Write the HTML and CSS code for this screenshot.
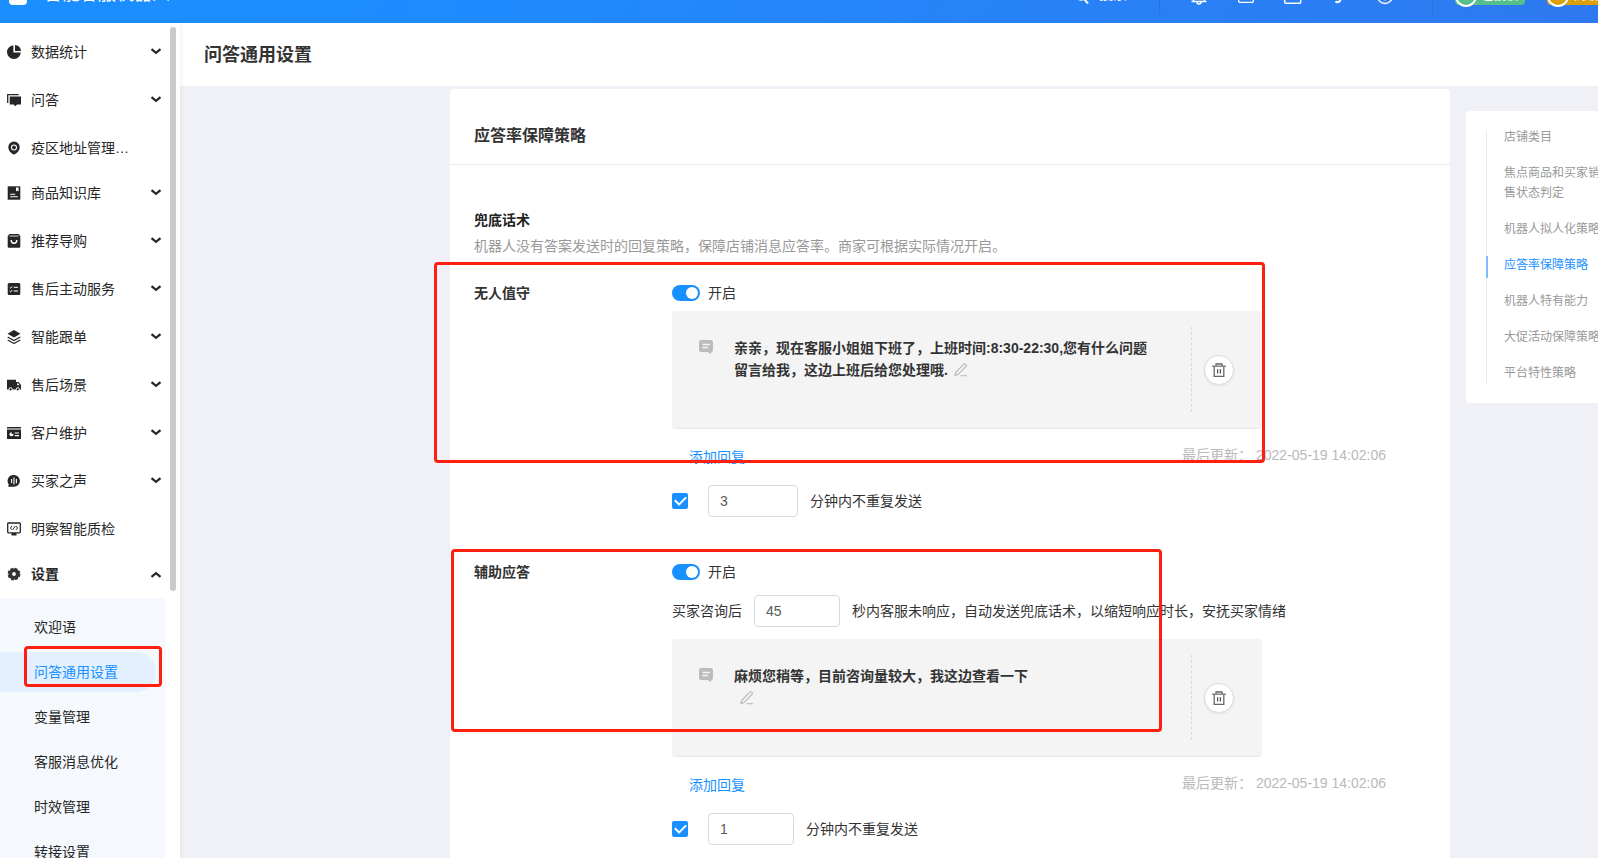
FILE: index.html
```html
<!DOCTYPE html>
<html lang="zh-CN">
<head>
<meta charset="utf-8">
<title>问答通用设置</title>
<link rel="stylesheet" href="styles.css">
</head>
<body>
<svg class="defs" aria-hidden="true">
  <symbol id="chevron" viewBox="0 0 12 12"><path d="M1.500 3.200 6 6.800 10.500 3.200" fill="none" stroke="#262626" stroke-width="2.200"/></symbol>
  <symbol id="bubble" viewBox="0 0 14 14"><path d="M2 0h10a2 2 0 0 1 2 2v8a2 2 0 0 1-1.500 2L11.500 14 8.500 12H2a2 2 0 0 1-2-2V2a2 2 0 0 1 2-2z" fill="#bcbcbc"/><path d="M3.500 4.500h7.500M3.500 7.500h5.500" stroke="#f4f4f4" stroke-width="1.300"/></symbol>
  <symbol id="pencil" viewBox="0 0 14 14"><path d="M1 12.500l.8-3.200L9.800 1.200a1.300 1.300 0 0 1 1.900 0l.3.300a1.300 1.300 0 0 1 0 1.900L4 11.600zM6.500 12.700H13" fill="none" stroke="#b5b5b5" stroke-width="1.100"/></symbol>
  <symbol id="trash" viewBox="0 0 14 14"><path d="M0 3.200h14" stroke="#777" stroke-width="1.300"/><path d="M4 3V1h6v2M2.200 3.500v9.800h9.600V3.500" fill="none" stroke="#666" stroke-width="1.300"/><path d="M5.600 6.300v4.200M8.400 6.300v4.200" stroke="#555" stroke-width="1.300"/></symbol>
</svg>

<header class="topbar">
  <div class="topbar-inner">
    <span class="logo"></span>
    <span class="brand">智能客服机器人</span>
    <div class="tools">
      <button class="search" type="button">
        <svg width="14" height="16" viewBox="0 0 14 16"><circle cx="6" cy="7" r="5" fill="none" stroke="#fff" stroke-width="1.500"/><path d="M9 11l4 4.500" stroke="#fff" stroke-width="2"/></svg>
        <span>搜索</span></button>
      <span class="sep"></span>
      <div class="icons">
        <button type="button" aria-label="通知"><svg width="18" height="18" viewBox="0 0 18 18"><path d="M1.500 14.500h15M3.500 14V7a5.500 5.500 0 0 1 11 0v7M7 15a2 2 0 0 0 4 0" fill="none" stroke="#fff" stroke-width="1.500"/></svg></button>
        <button type="button" aria-label="消息"><svg width="18" height="18" viewBox="0 0 18 18"><rect x="2.700" y="2" width="14.600" height="13.300" rx="1" fill="none" stroke="#fff" stroke-width="1.300"/></svg></button>
        <button type="button" aria-label="窗口"><svg width="20" height="18" viewBox="0 0 20 18"><rect x="2.700" y="2" width="16" height="14.300" rx="1" fill="none" stroke="#fff" stroke-width="1.500"/></svg></button>
        <button type="button" aria-label="提示音"><svg width="18" height="18" viewBox="0 0 18 18"><path d="M10.500 3v9.500q0 2-3 3" fill="none" stroke="#fff" stroke-width="2"/><circle cx="6.500" cy="15" r="1.300" fill="#fff"/></svg></button>
        <button type="button" aria-label="帮助"><svg width="18" height="18" viewBox="0 0 18 18"><circle cx="9" cy="9" r="7.500" fill="none" stroke="#fff" stroke-width="1.300"/><path d="M9 5v6M9 12v1.500" stroke="#fff" stroke-width="1.300"/></svg></button>
      </div>
      <span class="sep"></span>
      <div class="badges">
        <span class="badge green"><i>✓</i>已授权</span>
        <span class="badge amber"><i>↑</i>高级版</span>
      </div>
    </div>
  </div>
</header>

<div class="shell">
  <aside class="sidebar">
    <nav class="menu">
      <a class="item" href="#"><svg class="ico" viewBox="0 0 14 14"><path d="M6.400.2A6.900 6.900 0 1 0 13.800 7.600H6.400z"/><path d="M8 0a6.200 6.200 0 0 1 6 6H8z"/></svg>数据统计<svg class="chev"><use href="#chevron"/></svg></a>
      <a class="item" href="#"><svg class="ico" viewBox="0 0 14 14"><path d="M.7 10V1.700h11" fill="none" stroke="#262626" stroke-width="1.300"/><path d="M2.700 3.500H14V11.500H10L8.300 13.300 6.700 11.500h-4z"/></svg>问答<svg class="chev"><use href="#chevron"/></svg></a>
      <a class="item plain" href="#"><svg class="ico" viewBox="0 0 14 14"><path d="M7 .5a5.600 5.600 0 0 1 5.700 5.700c0 3-2.200 5.800-5.700 7.500C3.500 12 1.300 9.200 1.300 6.200A5.600 5.600 0 0 1 7 .5z"/><circle cx="7" cy="6.500" r="2.500" fill="none" stroke="#fff" stroke-width="1.100"/></svg>疫区地址管理…</a>
      <a class="item" href="#"><svg class="ico" viewBox="0 0 14 14"><path d="M.7.300H13.300V13.700H.7z"/><path d="M3.200 8.300h5M3.200 10.700h7.600" stroke="#fff" stroke-width="1.100"/><path d="M9 1.500h2.600v4L10.300 4.500 9 5.500z" fill="#fff"/></svg>商品知识库<svg class="chev"><use href="#chevron"/></svg></a>
      <a class="item" href="#"><svg class="ico" viewBox="0 0 14 14"><path d="M2.500 0h9L13.300 2V12.500a1.200 1.200 0 0 1-1.200 1.200H1.900A1.200 1.200 0 0 1 .7 12.500V2z"/><path d="M2.500 2h9" stroke="#fff" stroke-width=".8"/><path d="M4.200 6a2.800 3.300 0 0 0 5.600 0" fill="none" stroke="#fff" stroke-width="1.400"/></svg>推荐导购<svg class="chev"><use href="#chevron"/></svg></a>
      <a class="item" href="#"><svg class="ico" viewBox="0 0 14 14"><rect x=".7" y="1" width="12.600" height="12" rx="1.500"/><path d="M2.700 5.300l.9.900 1.500-1.800M2.700 9l.9.900 1.500-1.800M6.700 5.300h4.300M6.700 9h4.300" fill="none" stroke="#fff" stroke-width="1"/></svg>售后主动服务<svg class="chev"><use href="#chevron"/></svg></a>
      <a class="item" href="#"><svg class="ico" viewBox="0 0 14 14"><path d="M7 0 13.500 3.800 7 7.600.500 3.800z"/><path d="M.7 6.900 7 10.500 13.300 6.900M.7 10 7 13.500 13.300 10" fill="none" stroke="#262626" stroke-width="1.200"/></svg>智能跟单<svg class="chev"><use href="#chevron"/></svg></a>
      <a class="item" href="#"><svg class="ico" viewBox="0 0 14 14"><path d="M0 1.800H9V4h2.500L14 7v4.500H0z"/><path d="M10.200 5.300h1l1.300 1.900h-2.300z" fill="#fff"/><circle cx="3.600" cy="11.300" r="1.600" stroke="#fff"/><circle cx="10.800" cy="11.300" r="1.600" stroke="#fff"/></svg>售后场景<svg class="chev"><use href="#chevron"/></svg></a>
      <a class="item" href="#"><svg class="ico" viewBox="0 0 14 14"><path d="M0 1h14v1.400H0zM0 3.400h14V13H0z"/><circle cx="4.500" cy="8.200" r="2" fill="#fff"/><path d="M4.700 8V6H7v2z"/><path d="M7.700 7H12M7.700 9.600H12" stroke="#fff" stroke-width="1.200"/></svg>客户维护<svg class="chev"><use href="#chevron"/></svg></a>
      <a class="item" href="#"><svg class="ico" viewBox="0 0 14 14"><path d="M7 1a5.800 5.800 0 1 1 0 11.800H1.300V11.500l.7-.8A5.900 5.900 0 0 1 7 1z"/><path d="M4.600 5v4.200M7 3.500v7M9.400 5v4.200" stroke="#fff" stroke-width="1.100"/></svg>买家之声<svg class="chev"><use href="#chevron"/></svg></a>
      <a class="item plain" href="#"><svg class="ico" viewBox="0 0 14 14"><rect x=".7" y="1" width="12.600" height="9.800" rx=".8" fill="none" stroke="#262626" stroke-width="1.300"/><path d="M4.500 11h5v2.500h-5z"/><path d="M5 4 3.400 6 5 7.800M8.300 4 5.800 7.800M9 4l1.600 2L9 7.800" fill="none" stroke="#262626" stroke-width="1"/></svg>明察智能质检</a>
      <a class="item open" href="#"><svg class="ico" viewBox="0 0 14 14"><circle cx="7" cy="7" r="3.700" fill="none" stroke="#333" stroke-width="3.600"/><circle cx="7" cy="7" r="5.600" fill="none" stroke="#333" stroke-width="1.600" stroke-dasharray="2.900 1.500"/></svg>设置<svg class="chev up"><use href="#chevron"/></svg></a>
    </nav>
    <nav class="submenu">
      <a href="#">欢迎语</a>
      <a class="current" href="#">问答通用设置</a>
      <a href="#">变量管理</a>
      <a href="#">客服消息优化</a>
      <a href="#">时效管理</a>
      <a href="#">转接设置</a>
    </nav>
    <span class="scrollbar"></span>
  </aside>

  <main class="main">
    <h1 class="page-title">问答通用设置</h1>
    <div class="content">
      <section class="card">
        <h2 class="card-title">应答率保障策略</h2>
        <div class="card-body">
          <h3 class="group-title">兜底话术</h3>
          <p class="desc">机器人没有答案发送时的回复策略，保障店铺消息应答率。商家可根据实际情况开启。</p>

          <div class="setting">
            <h4 class="setting-name">无人值守</h4>
            <div class="setting-body">
              <label class="toggle"><input class="switch" type="checkbox" checked>开启</label>
              <div class="reply first">
                <svg class="bubble"><use href="#bubble"/></svg>
                <p class="reply-text">亲亲，现在客服小姐姐下班了，上班时间:8:30-22:30,您有什么问题留言给我，这边上班后给您处理哦. <svg class="pencil"><use href="#pencil"/></svg></p>
                <div class="reply-action"><button class="delete" type="button" aria-label="删除"><svg><use href="#trash"/></svg></button></div>
              </div>
              <div class="foot"><a href="#">添加回复</a><span class="updated">最后更新： 2022-05-19 14:02:06</span></div>
              <div class="repeat"><input class="check" type="checkbox" checked aria-label="启用不重复发送"><label class="field"><input class="num wide" type="text" value="3">分钟内不重复发送</label></div>
            </div>
          </div>

          <div class="setting">
            <h4 class="setting-name">辅助应答</h4>
            <div class="setting-body">
              <label class="toggle"><input class="switch" type="checkbox" checked>开启</label>
              <label class="field delay">买家咨询后<input class="num" type="text" value="45">秒内客服未响应，自动发送兜底话术，以缩短响应时长，安抚买家情绪</label>
              <div class="reply">
                <svg class="bubble"><use href="#bubble"/></svg>
                <p class="reply-text">麻烦您稍等，目前咨询量较大，我这边查看一下<br><svg class="pencil"><use href="#pencil"/></svg></p>
                <div class="reply-action"><button class="delete" type="button" aria-label="删除"><svg><use href="#trash"/></svg></button></div>
              </div>
              <div class="foot"><a href="#">添加回复</a><span class="updated">最后更新： 2022-05-19 14:02:06</span></div>
              <div class="repeat"><input class="check" type="checkbox" checked aria-label="启用不重复发送"><label class="field"><input class="num" type="text" value="1">分钟内不重复发送</label></div>
            </div>
          </div>
        </div>
      </section>

      <nav class="anchors">
        <ul>
          <li><a href="#">店铺类目</a></li>
          <li><a href="#">焦点商品和买家销售状态判定</a></li>
          <li><a href="#">机器人拟人化策略</a></li>
          <li class="active"><a href="#">应答率保障策略</a></li>
          <li><a href="#">机器人特有能力</a></li>
          <li><a href="#">大促活动保障策略</a></li>
          <li><a href="#">平台特性策略</a></li>
        </ul>
      </nav>
    </div>
  </main>
</div>

<span class="mark mark-unattended"></span>
<span class="mark mark-assist"></span>
<span class="mark mark-menu"></span>
</body>
</html>
```

FILE: styles.css
```css
* { box-sizing: border-box; }

body {
  margin: 0;
  height: 100vh;
  display: flex;
  flex-direction: column;
  overflow: hidden;
  position: relative;
  background: #eff1f6;
  color: #333;
  font: 14px/22px "Liberation Sans", "Noto Sans CJK SC", sans-serif;
}

h1, h2, h3, h4, p, ul { margin: 0; padding: 0; }
a { color: inherit; text-decoration: none; }
button { border: 0; padding: 0; background: none; color: inherit; font: inherit; }
.defs { position: absolute; width: 0; height: 0; }

/* top bar, scrolled partly out of view */
.topbar {
  flex: none;
  height: 23px;
  display: flex;
  flex-direction: column;
  justify-content: flex-end;
  overflow: hidden;
  color: #fff;
  background: linear-gradient(100deg, #1a8fff 0%, #1e8cff 25%, #2f79f0 100%);
}
.topbar-inner { flex: none; height: 54px; display: flex; align-items: center; padding-left: 9px; }
.logo { width: 18px; height: 18px; border-radius: 4px; background: #fff; }
.brand { margin-left: 17px; padding-bottom: 4px; font-size: 18px; }
.tools { margin-left: auto; display: flex; align-items: center; flex: none; }
.search { display: flex; align-items: center; gap: 10px; margin-right: 32px; }
.search span { padding-bottom: 4px; }
.sep { width: 1px; height: 38px; background: #2573dc; }
.icons { display: flex; gap: 28px; margin: 0 38px 0 30px; }
.icons button { display: flex; }
.badges { display: flex; gap: 22px; margin-left: 22px; width: 143px; }
.badge { flex: none; width: 70px; height: 18px; display: flex; align-items: center; border-radius: 4px; font-size: 12px; line-height: 14px; }
.badge i { flex: none; width: 22px; height: 22px; margin-right: 5px; border: 2px solid #fff; border-radius: 50%; text-align: center; line-height: 18px; font-style: normal; background: inherit; }
.green { background: #55c08a; }
.amber { background: #dc9f08; }

.shell { flex: 1; min-height: 0; display: flex; }

/* sidebar */
.sidebar { position: relative; z-index: 1; flex: none; width: 180px; background: #fff; box-shadow: 1px 0 5px rgba(0, 0, 0, .06); overflow: hidden; color: #262626; }
.menu { padding-top: 5px; }
.item { display: flex; align-items: center; height: 48px; padding: 0 18px 0 7px; }
.item.plain { height: 45px; padding-top: 3px; }
.ico { width: 14px; height: 14px; margin-right: 10px; fill: #262626; }
.chev { width: 12px; height: 12px; margin-left: auto; }
.up { transform: rotate(180deg); }
.open { font-weight: bold; }
.submenu { display: flex; flex-direction: column; gap: 5px; height: 400px; margin-right: 14px; padding-top: 9px; background: #f5f9fd; }
.submenu a { flex: none; margin-right: 10px; padding-left: 34px; line-height: 40px; }
.submenu .current { color: #1890ff; background: #e2f0ff; border-radius: 0 20px 20px 0; }
.scrollbar { position: absolute; top: 4px; right: 4px; width: 6px; height: 564px; border-radius: 3px; background: #cacaca; }

/* page */
.main { flex: 1; min-width: 0; overflow: hidden; }
.page-title { height: 63px; padding: 2px 0 0 24px; font-size: 18px; line-height: 61px; background: #fff; }
.content { display: grid; grid-template-columns: minmax(0, 1fr) 132px; gap: 16px; align-items: start; padding: 3px 0 0 270px; }
.card { background: #fff; border-radius: 4px; padding-bottom: 40px; }
.card-title { padding: 35px 24px 16px; font-size: 16px; line-height: 24px; font-weight: bold; border-bottom: 1px solid #ebebeb; }
.card-body { padding: 44px 64px 0 24px; }
.group-title { font-size: 14px; color: #222; }
.desc { margin-top: 4px; color: #999; }

.setting { display: flex; margin-top: 25px; }
.setting + .setting { margin-top: 44px; }
.setting-name { flex: none; width: 198px; font-size: 14px; }
.setting-body { flex: 1; min-width: 0; }
.toggle { display: flex; align-items: center; gap: 8px; }

.switch { appearance: none; margin: 0; width: 28px; height: 16px; padding: 2px; border-radius: 8px; background: #1890ff; display: flex; justify-content: flex-end; }
.switch::before { content: ""; width: 12px; height: 12px; border-radius: 50%; background: #fff; }

.reply { display: flex; width: 590px; max-width: 100%; min-height: 118px; margin-top: 12px; padding: 16px 0; border-radius: 4px; border-bottom: 1px solid #e8e8e8; background: #f4f4f4; }
.reply.first { margin-top: 7px; }
.bubble { flex: none; width: 14px; height: 14px; margin: 13px 21px 0 27px; }
.reply-text { flex: 1; max-width: 424px; padding-top: 10px; font-weight: bold; }
.pencil { width: 14px; height: 14px; margin-left: 2px; vertical-align: -2px; }
.reply-text br + .pencil { margin-left: 6px; }
.reply-action { flex: none; width: 71px; margin-left: auto; padding-left: 12px; display: flex; align-items: center; border-left: 1px dashed #d9d9d9; }
.delete { width: 30px; height: 30px; display: flex; align-items: center; justify-content: center; border: 1px solid #dcdcdc; border-radius: 50%; background: #fff; box-shadow: 0 1px 3px rgba(0, 0, 0, .08); }
.delete svg { width: 14px; height: 14px; }

.foot { display: flex; align-items: center; justify-content: space-between; height: 56px; padding-left: 17px; }
.foot a { color: #1890ff; }
.updated { padding-bottom: 4px; color: #b9b9b9; }

.repeat { display: flex; align-items: center; gap: 20px; }
.check { appearance: none; margin: 0; width: 16px; height: 16px; border-radius: 2px; background: #1890ff; display: flex; align-items: center; justify-content: center; }
.check::before { content: ""; width: 5px; height: 9px; margin-bottom: 3px; border: solid #fff; border-width: 0 2px 2px 0; transform: rotate(45deg); }
.field { display: flex; align-items: center; gap: 12px; white-space: nowrap; }
.delay { margin-top: 12px; }
.num { width: 86px; height: 32px; padding: 0 11px; border: 1px solid #d9d9d9; border-radius: 4px; background: #fff; color: #595959; font: inherit; }
.wide { width: 90px; }

/* section anchors */
.anchors { margin-top: 22px; padding: 16px 0 20px 20px; background: #fff; border-radius: 4px 0 0 4px; font-size: 12px; line-height: 20px; color: #999; overflow: hidden; }
.anchors ul { position: relative; display: flex; flex-direction: column; gap: 16px; width: 118px; list-style: none; }
.anchors ul::before { content: ""; position: absolute; left: 0; top: 4px; bottom: 0; width: 1px; background: #ebebeb; }
.anchors li { position: relative; padding-left: 18px; }
.anchors .active { color: #1890ff; }
.anchors .active::before { content: ""; position: absolute; left: 0; top: 1px; width: 2px; height: 22px; background: #7fbcff; }

/* highlight frames drawn over the page */
.mark { position: absolute; z-index: 2; border: 3px solid #ff1f10; border-radius: 4px; pointer-events: none; }
.mark-unattended { left: 434px; top: 262px; width: 831px; height: 201px; }
.mark-assist { left: 451px; top: 549px; width: 711px; height: 183px; }
.mark-menu { left: 24px; top: 646px; width: 138px; height: 41px; }
```
